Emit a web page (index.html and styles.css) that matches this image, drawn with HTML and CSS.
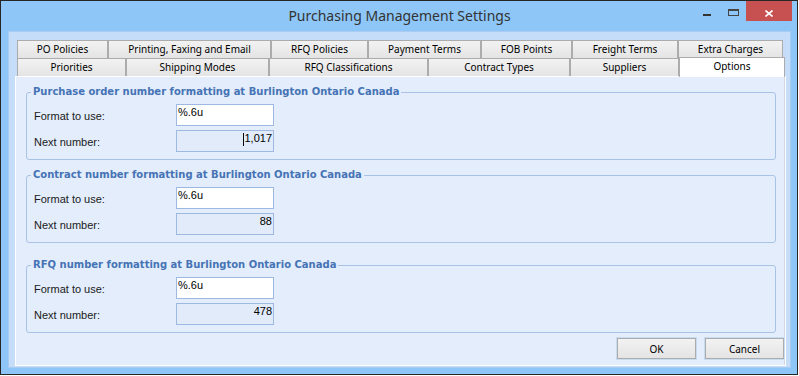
FILE: index.html
```html
<!DOCTYPE html>
<html lang="en">
<head>
  <meta charset="UTF-8">
  <title>Purchasing Management Settings</title>
  <link rel="stylesheet" href="styles.css">
</head>
<body>
  <div class="window">
    <div class="titlebar">
      <span></span>
      <span class="title">Purchasing Management Settings</span>
      <div class="controls">
        <div class="ctl ctl-min"><span class="dash"></span></div>
        <div class="ctl ctl-max"><span class="box"></span></div>
        <div class="ctl ctl-close">
          <svg width="8" height="7" viewBox="0 0 8 7">
            <path d="M0.5 0.5 L7.5 6.5 M7.5 0.5 L0.5 6.5" stroke="#fff" stroke-width="1.6" fill="none"/>
          </svg>
        </div>
      </div>
    </div>

    <div class="client">
      <div class="tabs">
        <div class="tab-row row-top">
          <div class="tab">PO Policies</div>
          <div class="tab">Printing, Faxing and Email</div>
          <div class="tab">RFQ Policies</div>
          <div class="tab">Payment Terms</div>
          <div class="tab">FOB Points</div>
          <div class="tab">Freight Terms</div>
          <div class="tab">Extra Charges</div>
        </div>
        <div class="tab-row row-bottom">
          <div class="tab">Priorities</div>
          <div class="tab">Shipping Modes</div>
          <div class="tab">RFQ Classifications</div>
          <div class="tab">Contract Types</div>
          <div class="tab">Suppliers</div>
          <div class="tab active">Options</div>
        </div>
      </div>

      <div class="panel">
        <fieldset class="group">
          <legend>Purchase order number formatting at Burlington Ontario Canada</legend>
          <div class="form">
            <label>Format to use:</label>
            <div class="field">%.6u</div>
            <label>Next number:</label>
            <div class="field readonly"><span class="caret"></span>1,017</div>
          </div>
        </fieldset>

        <fieldset class="group">
          <legend>Contract number formatting at Burlington Ontario Canada</legend>
          <div class="form">
            <label>Format to use:</label>
            <div class="field">%.6u</div>
            <label>Next number:</label>
            <div class="field readonly">88</div>
          </div>
        </fieldset>

        <fieldset class="group group-last">
          <legend>RFQ number formatting at Burlington Ontario Canada</legend>
          <div class="form">
            <label>Format to use:</label>
            <div class="field">%.6u</div>
            <label>Next number:</label>
            <div class="field readonly">478</div>
          </div>
        </fieldset>

        <div class="actions">
          <button class="btn">OK</button>
          <button class="btn">Cancel</button>
        </div>
      </div>
    </div>
  </div>
</body>
</html>
```

FILE: styles.css
```css
body {
  margin: 0;
  background: #fff;
  font-family: "Liberation Sans", Arial, sans-serif;
  font-size: 11px;
  color: #000;
}

.window {
  width: 798px;
  height: 375px;
  box-sizing: border-box;
  border: 1px solid #262626;
  background: #8dc6f7;
  padding: 0 6px 6px 7px;
  display: flex;
  flex-direction: column;
}

/* title bar */
.titlebar {
  height: 30px;
  flex: none;
  display: grid;
  grid-template-columns: 1fr auto 1fr;
}

.title {
  font-family: "Noto Sans", sans-serif;
  font-size: 14px;
  line-height: 30px;
  color: #333;
  white-space: nowrap;
}

.controls {
  justify-self: end;
  display: flex;
  margin-right: -1px;
}

.ctl {
  height: 20px;
  width: 26px;
  display: flex;
  justify-content: center;
  box-sizing: border-box;
}

.ctl-min {
  padding-top: 13px;
}

.dash {
  width: 8px;
  height: 2px;
  background: #333;
}

.ctl-max {
  padding-top: 8px;
}

.box {
  width: 11px;
  height: 7px;
  box-sizing: border-box;
  border: 1px solid #444;
  border-top-width: 2px;
}

.ctl-close {
  width: 46px;
  background: #c75050;
  align-items: center;
  padding-top: 4px;
}

.ctl-close svg {
  display: block;
}

/* client area */
.client {
  flex: 1;
  border: 1px solid #a9cdf2;
  background: #c5ddf8;
  padding: 8px 4px 1px 6px;
  display: flex;
  flex-direction: column;
}

.tabs {
  margin-left: 2px;
  font-family: "Noto Sans", sans-serif;
  font-size: 10px;
  color: #000;
}

.tab-row {
  display: grid;
}

.row-top {
  grid-template-columns: 91px 163px 97px 113px 91px 106px 105px;
}

.row-bottom {
  grid-template-columns: 109px 143px 159px 142px 109px 106px;
}

.tab {
  height: 18px;
  box-sizing: border-box;
  border: 1px solid #acacac;
  border-bottom: none;
  background: linear-gradient(#f2f2f2, #e4e4e4);
  line-height: 17px;
  text-align: center;
  white-space: nowrap;
}

.tab.active {
  position: relative;
  z-index: 1;
  height: 20px;
  margin: -1px 0 -1px;
  background: #fff;
}

.panel {
  flex: 1;
  border: 1px solid #fff;
  box-shadow: inset -1px 0 #cfd8e4;
  background: #e3edfb;
  display: flex;
  flex-direction: column;
}

/* group boxes */
.group {
  margin: 8px 9px 0 10px;
  padding: 5px 7px 7px;
  border: 1px solid #a8c3e6;
  border-radius: 3px;
  min-width: 0;
}

.group-last {
  margin-top: 15px;
}

.group legend {
  font-family: "DejaVu Sans", sans-serif;
  font-weight: bold;
  font-size: 10px;
  line-height: 14px;
  color: #4673b5;
  padding: 0 2px;
  margin-left: -3px;
}

.form {
  display: grid;
  grid-template-columns: 142px 98px;
  grid-auto-rows: 22px;
  row-gap: 4px;
  align-items: center;
}

.form label {
  padding-top: 2px;
  color: #1a1a1a;
}

.field {
  height: 22px;
  box-sizing: border-box;
  border: 1px solid #9db9e1;
  background: #fff;
  padding: 1px 1px 0;
  line-height: 13px;
  white-space: nowrap;
}

.field.readonly {
  background: #e1ebf9;
  text-align: right;
}

.caret {
  display: inline-block;
  width: 0;
  height: 13px;
  border-left: 1px solid #000;
  vertical-align: top;
  margin-top: 1px;
}

/* buttons */
.actions {
  display: flex;
  justify-content: flex-end;
  gap: 9px;
  margin: 5px 1px 0 0;
}

.btn {
  width: 79px;
  height: 21px;
  border: 1px solid #acacac;
  box-shadow: 0 0 0 1px #c9dbf1;
  background: linear-gradient(#f2f2f2, #e4e4e4);
  font-family: "Noto Sans", sans-serif;
  font-size: 10px;
  color: #000;
  padding: 0;
}
```
